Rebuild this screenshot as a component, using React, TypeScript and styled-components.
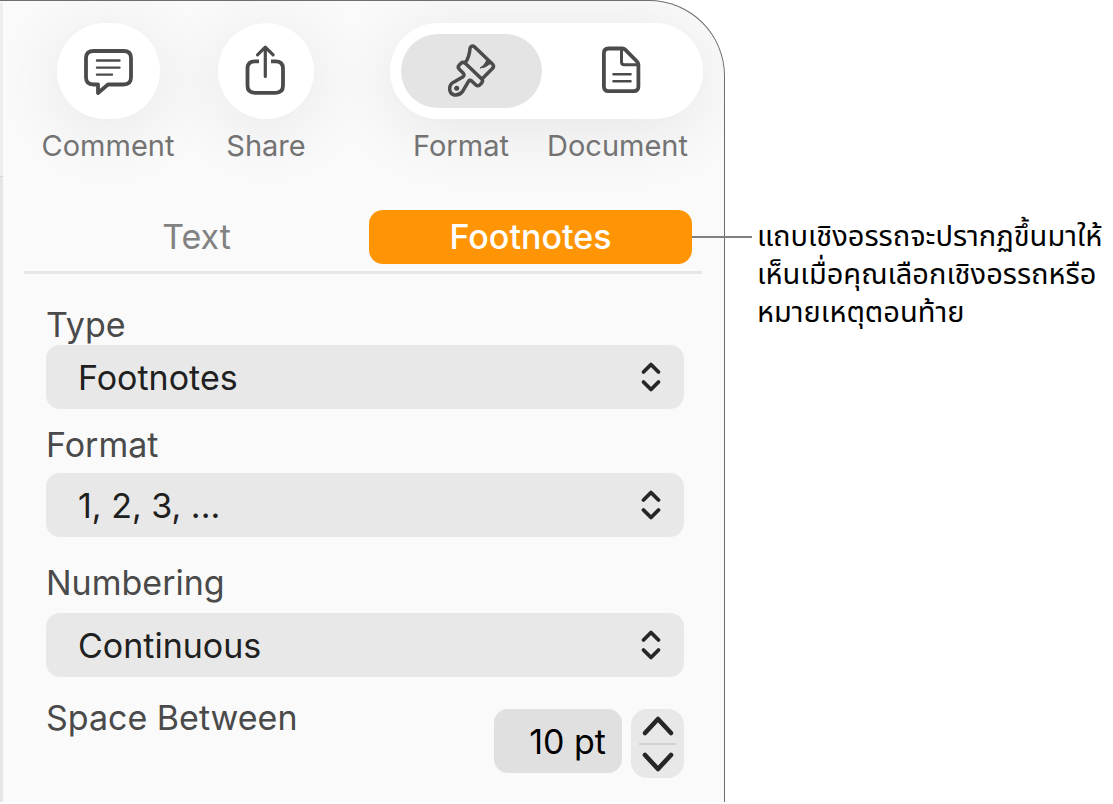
import React from "react";
import styled, { createGlobalStyle } from "styled-components";

const GlobalStyle = createGlobalStyle`
  *, *::before, *::after { box-sizing: border-box; }
  body {
    margin: 0;
    background: #fff;
    font-family: Inter, "Liberation Sans", sans-serif;
  }
  button, input, select { font: inherit; color: inherit; border: 0; margin: 0; padding: 0; background: none; }
`;

const Page = styled.main`
  display: flex;
  align-items: flex-start;
`;

const Panel = styled.section`
  flex: 1;
  min-width: 0;
  display: flex;
  border-top: 1px solid #6e6e6e;
  border-right: 1px solid #6e6e6e;
  border-top-right-radius: 76px;
  background: #fafafa;
`;

const WindowEdge = styled.div`
  flex: none;
  width: 3px;
  background: #e6e6e6;
  border-top: 2px solid #f6f6f6;
`;

const EdgeHeader = styled.div`
  height: 174px;
  background: #ededed;
  border-bottom: 1px solid #d6d6d6;
`;

const PanelBody = styled.div`
  flex: 1;
  min-width: 0;
`;

const Toolbar = styled.header`
  display: flex;
  align-items: flex-start;
  gap: 42px;
  padding: 22px 21px 47px 37px;
  border-top-right-radius: 75px;
  overflow: clip;
`;

const raised = `
  height: 96px;
  background: #fff;
  border-radius: 48px;
  box-shadow: 0 10px 72px rgba(0, 0, 0, 0.09);
`;

const Tool = styled.div<{ $width: number }>`
  display: flex;
  flex-direction: column;
  align-items: center;
  width: ${(p) => p.$width}px;
`;

const RoundButton = styled.button<{ $width: number }>`
  ${raised}
  width: ${(p) => p.$width}px;
  display: flex;
  align-items: center;
  justify-content: center;
`;

const Caption = styled.span`
  position: relative;
  font-size: 29px;
  line-height: 34px;
  color: #737373;
  white-space: nowrap;
`;

const ToolCaption = styled(Caption)`
  margin-top: 10px;
`;

const Switcher = styled.div`
  margin-left: auto;
  width: 313px;
`;

const Segments = styled.div`
  ${raised}
  display: flex;
  padding: 11px 0 11px 11px;
`;

const Segment = styled.button<{ $selected?: boolean }>`
  flex: ${(p) => (p.$selected ? "0 0 141px" : "1")};
  display: flex;
  align-items: center;
  justify-content: center;
  border-radius: 37px;
  background: ${(p) => (p.$selected ? "#e4e4e4" : "transparent")};
`;

const SwitcherCaptions = styled.div`
  display: flex;
  justify-content: space-between;
  margin-top: 10px;
  padding: 0 15px 0 23px;
`;

const Icon = styled.svg`
  display: block;
  flex: none;
  width: 56px;
  height: 56px;
  fill: none;
  stroke: #4b4b4b;
  stroke-width: 3.8;
  stroke-linecap: round;
  stroke-linejoin: round;
`;

const Tabs = styled.div`
  display: grid;
  grid-template-columns: 345fr 323fr;
  margin: 0 22px 0 21px;
  padding: 0 10px 7px 0;
  border-bottom: 3px solid #e6e6e6;
`;

const Tab = styled.button<{ $selected?: boolean }>`
  position: relative;
  height: 54px;
  border-radius: 14px;
  font-size: 34px;
  line-height: 54px;
  font-weight: ${(p) => (p.$selected ? 500 : 400)};
  color: ${(p) => (p.$selected ? "#fff" : "#828282")};
  background: ${(p) => (p.$selected ? "#ff9505" : "transparent")};
`;

const CalloutLine = styled.span`
  position: absolute;
  left: 100%;
  top: 26px;
  width: 60px;
  height: 2px;
  background: #808080;
`;

const Form = styled.form`
  padding: 31px 40px 24px 43px;
`;

const Field = styled.div<{ $before?: number; $gap?: number }>`
  display: flex;
  flex-direction: column;
  gap: ${(p) => p.$gap ?? 0}px;
  margin-top: ${(p) => p.$before ?? 0}px;
`;

const Label = styled.label`
  font-size: 34px;
  line-height: 40px;
  color: #4a4a4a;
  white-space: nowrap;
`;

const SelectBox = styled.div`
  display: grid;
  align-items: center;
  > * { grid-area: 1 / 1; }
`;

const Select = styled.select`
  appearance: none;
  width: 100%;
  height: 64px;
  padding: 0 64px 0 32px;
  border-radius: 14px;
  background: #e8e8e8;
  color: #202020;
  font-size: 34px;
`;

const SelectArrows = styled.svg`
  justify-self: end;
  margin-right: 22px;
  width: 22px;
  height: 32px;
  fill: none;
  stroke: #262626;
  stroke-width: 3.8;
  stroke-linecap: round;
  stroke-linejoin: round;
  pointer-events: none;
`;

const SpaceRow = styled.div`
  display: flex;
  align-items: flex-start;
  margin-top: 21px;
`;

const SpaceControls = styled.div`
  display: flex;
  align-items: flex-start;
  gap: 9px;
  margin: 11px 0 0 auto;
`;

const Amount = styled.input`
  width: 128px;
  height: 64px;
  padding-right: 16px;
  border-radius: 14px;
  background: #e0e0e0;
  color: #000;
  font-size: 34px;
  text-align: right;
`;

const Stepper = styled.div`
  width: 53px;
  padding: 0 8px;
  border-radius: 16px;
  background: #e8e8e8;
`;

const StepButton = styled.button`
  display: flex;
  align-items: center;
  justify-content: center;
  width: 100%;
  height: 34px;
  & + & {
    height: 35px;
    border-top: 2px solid #d2d2d2;
  }
`;

const StepArrow = styled.svg`
  width: 34px;
  height: 22px;
  fill: none;
  stroke: #262626;
  stroke-width: 4.6;
  stroke-linecap: round;
  stroke-linejoin: round;
`;

const Callout = styled.aside`
  flex: none;
  width: 388px;
  padding: 218px 0 0 32px;
`;

const CalloutText = styled.p`
  margin: 0;
  font-family: "Noto Sans Thai", "Noto Sans", sans-serif;
  font-size: 29px;
  line-height: 38px;
  color: #000;
  white-space: nowrap;
`;

type PopupProps = {
  id: string;
  label: string;
  options: string[];
  before?: number;
  gap?: number;
};

function Popup({ id, label, options, before, gap }: PopupProps) {
  return (
    <Field $before={before} $gap={gap}>
      <Label htmlFor={id}>{label}</Label>
      <SelectBox>
        <Select id={id} defaultValue={options[0]}>
          {options.map((o) => (
            <option key={o}>{o}</option>
          ))}
        </Select>
        <SelectArrows viewBox="0 0 22 32" aria-hidden="true">
          <path d="M3.5 11 11 3.5 18.5 11M3.5 21 11 28.5 18.5 21" />
        </SelectArrows>
      </SelectBox>
    </Field>
  );
}

export default function App() {
  return (
    <Page>
      <GlobalStyle />
      <Panel>
        <WindowEdge>
          <EdgeHeader />
        </WindowEdge>
        <PanelBody>
          <Toolbar>
            <Tool $width={136}>
              <RoundButton $width={103} type="button" aria-labelledby="comment-caption">
                <Icon viewBox="0 0 56 56" aria-hidden="true">
                  <path d="M13.5 8H43.5Q51 8 51 15V34.5Q51 41.5 43.5 41.5H28L18 50V41.5H13.5Q6 41.5 6 34.5V15Q6 8 13.5 8Z" />
                  <path strokeWidth="2.4" d="M17 17.5H39.5M17 24.6H39.5M17 31.6H32" />
                </Icon>
              </RoundButton>
              <ToolCaption id="comment-caption">Comment</ToolCaption>
            </Tool>
            <Tool $width={96}>
              <RoundButton $width={96} type="button" aria-labelledby="share-caption">
                <Icon viewBox="0 0 56 56" aria-hidden="true">
                  <path strokeLinecap="butt" d="M21 18.3H17Q9.5 18.3 9.5 25.5V42.5Q9.5 49.8 17 49.8H37.5Q45 49.8 45 42.5V25.5Q45 18.3 37.5 18.3H33" />
                  <path strokeWidth="3.2" d="M27.3 4.5V33.5M19.5 11.8 27.3 4.2 35.1 11.8" />
                </Icon>
              </RoundButton>
              <ToolCaption id="share-caption">Share</ToolCaption>
            </Tool>
            <Switcher>
              <Segments>
                <Segment type="button" $selected aria-pressed="true" aria-labelledby="format-caption">
                  <Icon viewBox="42 38 168 168" aria-hidden="true">
                    <g strokeWidth="10.5">
                      <path d="M105 98Q118 82 120 54Q124 43 134 50L188 102Q193 108 188 114L156 146Q160 152 155 158L149 164Q143 169 137 163L124 151Q119 147 115 154L98 183Q89 196 73 194Q58 189 59 174Q60 160 72 155L98 140Q105 135 100 129L88 117Q82 111 87 105L93 99Q98 94 105 98Z" />
                      <path d="M105 98 156 147" />
                      <circle cx="80" cy="174" r="7.5" fill="#4b4b4b" stroke="none" />
                      <path d="M173 87Q168 92 166 98Q160 108 150 113Q166 113 182 99Z" fill="#4b4b4b" strokeWidth="3" />
                    </g>
                  </Icon>
                </Segment>
                <Segment type="button" aria-pressed="false" aria-labelledby="document-caption">
                  <Icon viewBox="0 0 56 56" aria-hidden="true">
                    <path d="M13.5 5.5H27.5Q29 5.5 30.2 6.7L42 18.5Q43.4 19.9 43.4 21.5V43.5Q43.4 48.2 38.7 48.2H13.5Q8.9 48.2 8.9 43.5V10.2Q8.9 5.5 13.5 5.5Z" />
                    <path strokeWidth="3" d="M26.5 6V19Q26.5 21.8 29.3 21.8H42.5" />
                    <path strokeWidth="2.6" d="M18.5 31.2H35.5M18.5 38.2H35.5" />
                  </Icon>
                </Segment>
              </Segments>
              <SwitcherCaptions>
                <Caption id="format-caption">Format</Caption>
                <Caption id="document-caption">Document</Caption>
              </SwitcherCaptions>
            </Switcher>
          </Toolbar>

          <Tabs role="tablist">
            <Tab type="button" role="tab" aria-selected="false">
              Text
            </Tab>
            <Tab type="button" role="tab" aria-selected="true" $selected>
              Footnotes
              <CalloutLine />
            </Tab>
          </Tabs>

          <Form>
            <Popup id="type" label="Type" options={["Footnotes"]} />
            <Popup id="format" label="Format" options={["1, 2, 3, ..."]} before={16} gap={8} />
            <Popup id="numbering" label="Numbering" options={["Continuous"]} before={26} gap={10} />
            <SpaceRow>
              <Label htmlFor="space">Space Between</Label>
              <SpaceControls>
                <Amount id="space" type="text" defaultValue="10 pt" />
                <Stepper>
                  <StepButton type="button" aria-label="Increase space">
                    <StepArrow viewBox="0 0 34 22" aria-hidden="true">
                      <path d="M4 18 17 4 30 18" />
                    </StepArrow>
                  </StepButton>
                  <StepButton type="button" aria-label="Decrease space">
                    <StepArrow viewBox="0 0 34 22" aria-hidden="true">
                      <path d="M4 4 17 18 30 4" />
                    </StepArrow>
                  </StepButton>
                </Stepper>
              </SpaceControls>
            </SpaceRow>
          </Form>
        </PanelBody>
      </Panel>
      <Callout>
        <CalloutText>
          แถบเชิงอรรถจะปรากฏขึ้นมาให้
          <br />
          เห็นเมื่อคุณเลือกเชิงอรรถหรือ
          <br />
          หมายเหตุตอนท้าย
        </CalloutText>
      </Callout>
    </Page>
  );
}
